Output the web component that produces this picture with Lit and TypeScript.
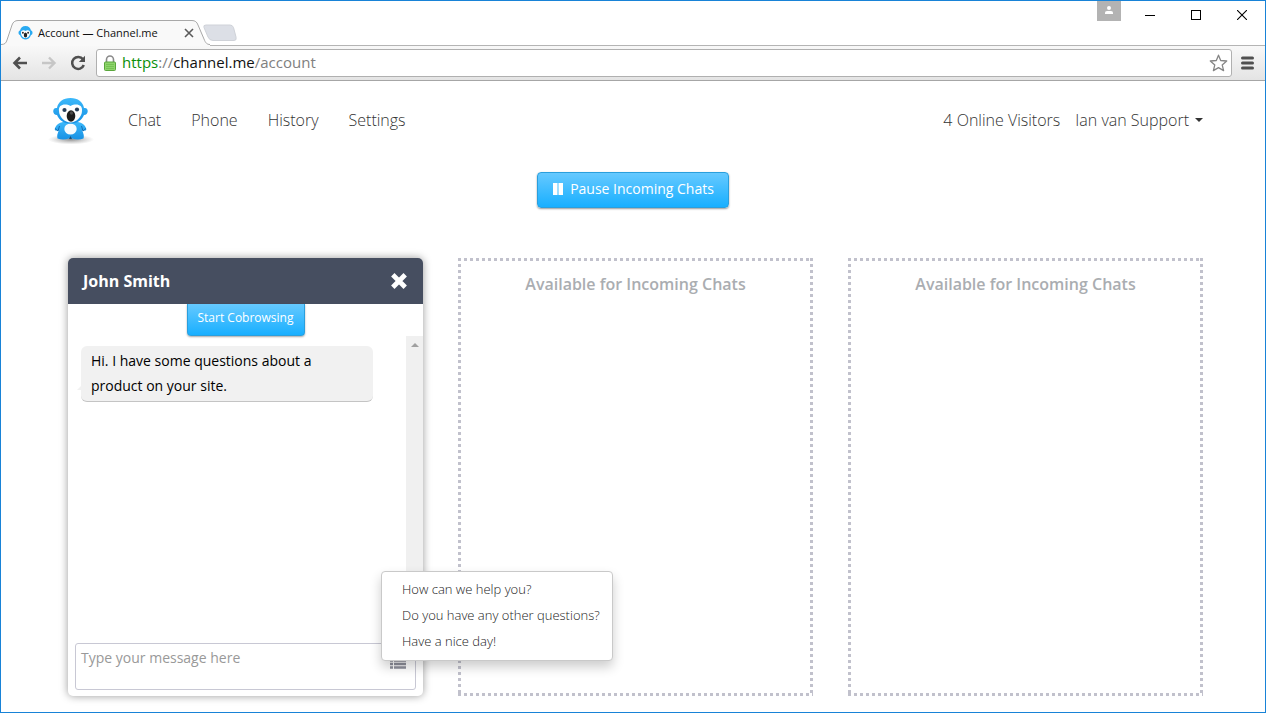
import { LitElement, html, css, svg } from "lit";
import { customElement, property, state } from "lit/decorators.js";

@customElement("browser-bar")
class BrowserBar extends LitElement {
  static styles = css`
    :host {
      display: block;
      font-family: "Open Sans", "Noto Sans", sans-serif;
    }
    button {
      border: 0;
      padding: 0;
      background: none;
      display: block;
      line-height: 0;
      font: inherit;
    }
    svg {
      display: block;
    }
    .titlebar {
      display: flex;
      height: 44px;
      background: #fff;
    }
    .tabs {
      flex: 1;
      display: flex;
      align-items: flex-end;
    }
    .tab {
      position: relative;
      display: flex;
      align-items: center;
      box-sizing: border-box;
      width: 206px;
      height: 25px;
      padding: 0 10px 0 17px;
      z-index: 1;
    }
    .shape {
      position: absolute;
      left: 0;
      top: 0;
    }
    .favicon,
    .title,
    .close {
      position: relative;
    }
    .title {
      flex: 1;
      margin-left: 5px;
      font-size: 11px;
      line-height: 16px;
      color: #111;
      white-space: nowrap;
    }
    .controls {
      display: flex;
      align-items: flex-start;
    }
    .user {
      width: 24px;
      height: 20px;
      background: #b3b3b3;
      margin-right: 6px;
    }
    .control {
      width: 46px;
      height: 28px;
      display: flex;
      align-items: center;
      justify-content: center;
    }
    .toolbar {
      display: flex;
      align-items: center;
      box-sizing: border-box;
      height: 36px;
      padding: 0 11px;
      border-top: 1px solid #b4b4b4;
      border-bottom: 1px solid #a6a6a6;
      background: linear-gradient(#f8f8f8, #e4e4e4);
    }
    .nav {
      margin-right: 13px;
    }
    .nav.reload {
      margin-right: 10px;
    }
    .address {
      flex: 1;
      display: flex;
      align-items: center;
      box-sizing: border-box;
      height: 28px;
      padding: 0 3px 0 7px;
      border: 1px solid #b0b0b0;
      border-radius: 3px;
      background: #fff;
      margin-right: 9px;
    }
    .url {
      flex: 1;
      margin-left: 6px;
      padding-bottom: 2px;
      font-size: 15px;
      line-height: 20px;
      color: #808080;
      outline: none;
    }
    .scheme {
      color: #0a8f0a;
    }
    .host {
      color: #111;
    }
  `;

  render() {
    return html`
      <div class="titlebar">
        <div class="tabs" role="tablist">
          <div class="tab" role="tab" aria-selected="true">
            <svg class="shape" width="236" height="26" viewBox="0 0 236 26">
              <path d="M203 7.500Q202 5 205 5H229Q231.500 5 232.500 7.500L235 17Q236 20.500 233 20.500H212Q208.500 20.500 207 17Z" fill="#dcdfe6" stroke="#cfd2d8" />
              <path d="M0 25C4 25 5 23 6 20L11 5C12 2 14 .5 17 .5H191C194 .5 196 2 197 5L203 19C204.500 23 206 25 209 25V26H0Z" fill="#f9f9f9" />
              <path d="M0 24.500C4 24.500 5 23 6 20L11 5C12 2 14 .5 17 .5H191C194 .5 196 2 197 5L203 19C204.500 23 206 24.500 209 24.500" fill="none" stroke="#a8a8a8" />
            </svg>
            <svg class="favicon" width="15" height="14" viewBox="0 0 15 14">
              <path d="M7.500 0C4.500 0 2.500 2 2 4.500C0 5 0 8.500 2 9C3 12 5.500 13.500 7.500 13.500S12 12 13 9C15 8.500 15 5 13 4.500C12.500 2 10.500 0 7.500 0Z" fill="#29aaf2" />
              <path d="M3 7C2.500 4 6 3.500 7.500 5C9 3.500 12.500 4 12 7C12 10 9.500 12 7.500 12S3 10 3 7Z" fill="#fff" />
              <ellipse cx="7.500" cy="9" rx="1.700" ry="2.600" fill="#222" />
              <circle cx="4.900" cy="6.700" r="1" fill="#333" />
              <circle cx="10.100" cy="6.700" r="1" fill="#333" />
            </svg>
            <span class="title">Account — Channel.me</span>
            <button class="close" aria-label="Close tab">
              <svg width="16" height="16" viewBox="0 0 16 16">
                <path d="M4 4L12 12M12 4L4 12" stroke="#5a5a5a" stroke-width="1.600" />
              </svg>
            </button>
          </div>
        </div>
        <div class="controls">
          <button class="user" aria-label="Profile">
            <svg width="24" height="20" viewBox="0 0 24 20">
              <circle cx="12" cy="7" r="2" fill="#fff" />
              <path d="M8 13V11.500Q8 10 10 10H14Q16 10 16 11.500V13Z" fill="#fff" />
            </svg>
          </button>
          <button class="control" aria-label="Minimize">
            <svg width="10" height="11"><path d="M0 5.500H10" stroke="#000" /></svg>
          </button>
          <button class="control" aria-label="Maximize">
            <svg width="10" height="10"><rect x=".5" y=".5" width="9" height="9" fill="none" stroke="#000" /></svg>
          </button>
          <button class="control" aria-label="Close">
            <svg width="10" height="10"><path d="M0 0L10 10M10 0L0 10" stroke="#000" stroke-width="1.100" /></svg>
          </button>
        </div>
      </div>
      <div class="toolbar">
        <button class="nav" aria-label="Back">
          <svg width="16" height="14" viewBox="0 0 16 14">
            <path d="M15 7H2.500M8 1.500L2.500 7L8 12.500" fill="none" stroke="#505050" stroke-width="2.600" />
          </svg>
        </button>
        <button class="nav" aria-label="Forward">
          <svg width="16" height="14" viewBox="0 0 16 14">
            <path d="M1 7H13.500M8 1.500L13.500 7L8 12.500" fill="none" stroke="#c6c6c6" stroke-width="2.400" />
          </svg>
        </button>
        <button class="nav reload" aria-label="Reload">
          <svg width="16" height="16" viewBox="0 0 16 16">
            <path d="M13 4.300A6 6 0 1 0 13.800 10" fill="none" stroke="#505050" stroke-width="2.500" />
            <path d="M15 .8V7H8.800Z" fill="#505050" />
          </svg>
        </button>
        <div class="address">
          <svg width="12" height="16" viewBox="0 0 12 16">
            <path d="M2.500 8V4.500A3.500 3.500 0 0 1 9.500 4.500V8" fill="none" stroke="#8a8a8a" stroke-width="1.600" />
            <rect x=".5" y="7" width="11" height="8.500" rx="1" fill="#8fd46c" stroke="#5aa63c" />
            <path d="M2 9.500H10M2 11.500H10M2 13.500H10" stroke="#6fbf4c" stroke-width=".8" />
          </svg>
          <div class="url" role="textbox" aria-label="Address" contenteditable="true" spellcheck="false"><span class="scheme">https</span>://<span class="host">channel.me</span>/account</div>
          <button aria-label="Bookmark this page">
            <svg width="19" height="18" viewBox="0 0 19 18">
              <path d="M9.500 1.200L11.700 6.500L17.700 7L13.200 10.900L14.600 16.600L9.500 13.600L4.400 16.600L5.800 10.900L1.300 7L7.300 6.500Z" fill="none" stroke="#858585" stroke-width="1.300" stroke-linejoin="round" />
            </svg>
          </button>
        </div>
        <button aria-label="Menu">
          <svg width="13" height="14" viewBox="0 0 13 14">
            <path d="M1.500 2H11.500M1.500 7H11.500M1.500 12H11.500" stroke="#505050" stroke-width="3" stroke-linecap="round" />
          </svg>
        </button>
      </div>
    `;
  }
}

const mascot = svg`
  <defs>
    <radialGradient id="shadow"><stop offset="0" stop-color="#777" stop-opacity=".8" /><stop offset="1" stop-color="#999" stop-opacity="0" /></radialGradient>
    <linearGradient id="fur" x1="0" y1="0" x2="0" y2="1"><stop offset="0" stop-color="#3bb8fa" /><stop offset="1" stop-color="#1791e4" /></linearGradient>
  </defs>
  <ellipse cx="24" cy="42.500" rx="23" ry="5" fill="url(#shadow)" />
  <path d="M16 25Q10 26 8 31Q7 34 10 33.500Q11 34 12 33Q9.500 38 10.500 41.500Q16 43.500 22 41.500H25Q31 43.500 36.500 41.500Q37.500 38 35 33Q36 34 37.500 33.500Q40 34 39 31Q37 26 31 25Z" fill="url(#fur)" />
  <path d="M8 31.500L11 34L12.500 29M39 31.500L36 34L34.500 29" fill="none" stroke="#116db4" />
  <ellipse cx="23.500" cy="32" rx="6.200" ry="5.500" fill="#f4fbff" />
  <path d="M22 42L23.500 39L25 42Z" fill="#164f7c" />
  <path d="M23.500 1C16 1 11 5 10 11C5 10 5 18 10 18C12 23 17 26.500 23.500 26.500S35 23 37 18C42 18 42 10 37 11C36 5 31 1 23.500 1Z" fill="url(#fur)" />
  <path d="M12 14C11 7.500 18 6 23.500 9C29 6 36 7.500 35 14C35 20 29 25.500 23.500 25.500S12 20 12 14Z" fill="#fdfefe" />
  <ellipse cx="17.500" cy="13" rx="2.100" ry="1.900" fill="#263f5a" />
  <ellipse cx="30" cy="12.500" rx="2.100" ry="1.900" fill="#263f5a" />
  <ellipse cx="24" cy="19" rx="4.300" ry="5.800" fill="#1d1d1d" />
  <ellipse cx="24.500" cy="16" rx="1.600" ry="1.800" fill="#4a4a4a" />
`;

@customElement("chat-window")
class ChatWindow extends LitElement {
  @property() name = "";
  @property({ attribute: false }) messages: string[] = [];
  @property({ attribute: false }) replies: string[] = [];
  @state() private menuOpen = true;

  static styles = css`
    :host {
      display: flex;
      flex-direction: column;
      min-width: 0;
      border-radius: 5px;
      background: #fff;
      box-shadow: 0 0 8px rgba(0, 0, 0, 0.4);
    }
    button {
      border: 0;
      padding: 0;
      background: none;
      font: inherit;
      display: block;
    }
    svg {
      display: block;
    }
    .head {
      display: flex;
      align-items: center;
      justify-content: space-between;
      height: 46px;
      padding: 0 15px;
      border-radius: 5px 5px 0 0;
      background: #464e60;
      color: #fff;
    }
    .name {
      margin: 0;
      font-size: 16px;
      line-height: 22px;
      font-weight: 700;
    }
    .cobrowse {
      align-self: center;
      box-sizing: border-box;
      height: 32px;
      padding: 0 10px 4px;
      border: 1px solid #2a9fdd;
      border-top: 0;
      border-radius: 0 0 4px 4px;
      background: linear-gradient(#66c9ff, #18afff);
      box-shadow: 0 1px 2px rgba(0, 0, 0, 0.35);
      color: #fff;
      font-size: 12px;
      line-height: 20px;
    }
    .log {
      flex: 1;
      display: flex;
      min-height: 120px;
    }
    .messages {
      flex: 1;
      padding: 10px 33px 0 13px;
    }
    .bubble {
      position: relative;
      margin: 0;
      padding: 2px 10px 3px;
      border-bottom: 1px solid #c4c4c4;
      border-radius: 6px;
      background: #f1f1f1;
      color: #000;
      font-size: 14px;
      line-height: 25px;
    }
    .bubble::before {
      content: "";
      position: absolute;
      left: -4px;
      bottom: 11px;
      border: solid transparent;
      border-width: 4px 4px 0 0;
      border-right-color: #f1f1f1;
    }
    .scrollbar {
      width: 17px;
      background: #f0f0f0;
      display: flex;
      justify-content: center;
    }
    .up {
      margin-top: 7px;
    }
    .compose {
      position: relative;
      display: flex;
      margin: 7px 7px 6px;
      border: 1px solid #c8c8d4;
      border-radius: 3px;
    }
    textarea {
      flex: 1;
      min-width: 0;
      box-sizing: border-box;
      height: 45px;
      padding: 4px 5px;
      border: 0;
      outline: none;
      resize: none;
      background: none;
      font: inherit;
      font-size: 14px;
      line-height: 20px;
      display: block;
    }
    textarea::placeholder {
      color: #999;
      opacity: 1;
    }
    .list {
      align-self: flex-start;
      margin: 15px 9px 0 0;
    }
    .menu {
      position: absolute;
      left: calc(100% - 34px);
      bottom: 28px;
      margin: 0;
      padding: 4px 0 6px;
      border: 1px solid #c9c9c9;
      border-radius: 4px;
      background: #fff;
      box-shadow: 0 6px 12px rgba(0, 0, 0, 0.2);
      list-style: none;
      z-index: 2;
    }
    .reply {
      width: 100%;
      padding: 0 12px 0 20px;
      font-size: 13px;
      line-height: 26px;
      font-weight: 300;
      color: #222;
      white-space: nowrap;
      text-align: left;
    }
  `;

  render() {
    return html`
      <header class="head">
        <h2 class="name">${this.name}</h2>
        <button aria-label="Close chat">
          <svg width="18" height="18" viewBox="0 0 18 18">
            <path d="M4.500 4.500L13.500 13.500M13.500 4.500L4.500 13.500" stroke="#fff" stroke-width="4.800" stroke-linecap="square" />
          </svg>
        </button>
      </header>
      <button class="cobrowse">Start Cobrowsing</button>
      <div class="log">
        <div class="messages">
          ${this.messages.map((m) => html`<p class="bubble">${m}</p>`)}
        </div>
        <div class="scrollbar" aria-hidden="true">
          <svg class="up" width="8" height="4"><path d="M0 4L4 0L8 4Z" fill="#a0a0a0" /></svg>
        </div>
      </div>
      <div class="compose">
        <textarea aria-label="Message" placeholder="Type your message here"></textarea>
        <button class="list" aria-label="Quick replies" @click=${() => (this.menuOpen = !this.menuOpen)}>
          <svg width="16" height="10" viewBox="0 0 16 10">
            <path d="M0 1.500H3M4 1.500H16M0 5H3M4 5H16M0 8.500H3M4 8.500H16" stroke="#8e909b" stroke-width="2.400" />
          </svg>
        </button>
        ${this.menuOpen
          ? html`<ul class="menu">
              ${this.replies.map((r) => html`<li><button class="reply">${r}</button></li>`)}
            </ul>`
          : null}
      </div>
    `;
  }
}

@customElement("app-root")
class AppRoot extends LitElement {
  static styles = css`
    :host {
      display: flex;
      flex-direction: column;
      box-sizing: border-box;
      min-height: 100vh;
      border: 1px solid #1883d7;
      background: #fff;
      font-family: "Open Sans", "Noto Sans", sans-serif;
      color: #333;
    }
    .top {
      display: flex;
      align-items: center;
      height: 48px;
      padding: 15px 62px 0 46px;
      font-size: 16px;
      line-height: 24px;
      font-weight: 300;
    }
    a {
      color: inherit;
      text-decoration: none;
    }
    svg {
      display: block;
    }
    .links {
      flex: 1;
      display: flex;
      gap: 30px;
      margin-left: 33px;
    }
    .visitors {
      margin-right: 15px;
    }
    .account {
      display: flex;
      align-items: center;
      gap: 6px;
      padding: 0;
      border: 0;
      background: none;
      color: inherit;
      font: inherit;
    }
    .pausebar {
      display: flex;
      justify-content: center;
      padding: 28px 0 50px;
    }
    .pause {
      display: flex;
      align-items: center;
      gap: 7px;
      box-sizing: border-box;
      height: 36px;
      padding: 0 14px 2px 15px;
      border: 1px solid #2a9fdd;
      border-radius: 4px;
      background: linear-gradient(#66c9ff, #18afff);
      box-shadow: 0 1px 2px rgba(0, 0, 0, 0.4);
      color: #fff;
      font-family: inherit;
      font-size: 14px;
      line-height: 20px;
      font-weight: 400;
    }
    .chats {
      flex: 1;
      display: grid;
      grid-template-columns: repeat(3, minmax(0, 1fr));
      gap: 35px;
      padding: 0 62px 16px 67px;
    }
    .slot {
      --dot: #c1c1cc 0 3px, transparent 3px 6px;
      padding-top: 14px;
      background:
        repeating-linear-gradient(90deg, var(--dot)) top / 100% 3px no-repeat,
        repeating-linear-gradient(90deg, var(--dot)) bottom / 100% 3px no-repeat,
        repeating-linear-gradient(var(--dot)) left / 3px 100% no-repeat,
        repeating-linear-gradient(var(--dot)) right / 3px 100% no-repeat;
      text-align: center;
    }
    .free {
      margin: 0;
      font-size: 16px;
      line-height: 24px;
      font-weight: 600;
      color: #aaadb1;
    }
  `;

  private links = ["Chat", "Phone", "History", "Settings"];
  private messages = ["Hi. I have some questions about a product on your site."];
  private replies = ["How can we help you?", "Do you have any other questions?", "Have a nice day!"];

  render() {
    return html`
      <browser-bar></browser-bar>
      <header class="top">
        <a href="#home" aria-label="Channel.me">
          <svg width="48" height="48" viewBox="0 -1 48 48">${mascot}</svg>
        </a>
        <nav class="links">
          ${this.links.map((l) => html`<a href="#${l.toLowerCase()}">${l}</a>`)}
        </nav>
        <a class="visitors" href="#visitors">4 Online Visitors</a>
        <button class="account">
          Ian van Support
          <svg width="8" height="4"><path d="M0 0H8L4 4Z" fill="#333" /></svg>
        </button>
      </header>
      <div class="pausebar">
        <button class="pause">
          <svg width="10" height="12"><path d="M0 0H4.500V12H0ZM5.500 0H10V12H5.500Z" fill="#fff" /></svg>
          Pause Incoming Chats
        </button>
      </div>
      <main class="chats">
        <chat-window name="John Smith" .messages=${this.messages} .replies=${this.replies}></chat-window>
        <section class="slot"><h2 class="free">Available for Incoming Chats</h2></section>
        <section class="slot"><h2 class="free">Available for Incoming Chats</h2></section>
      </main>
    `;
  }
}
